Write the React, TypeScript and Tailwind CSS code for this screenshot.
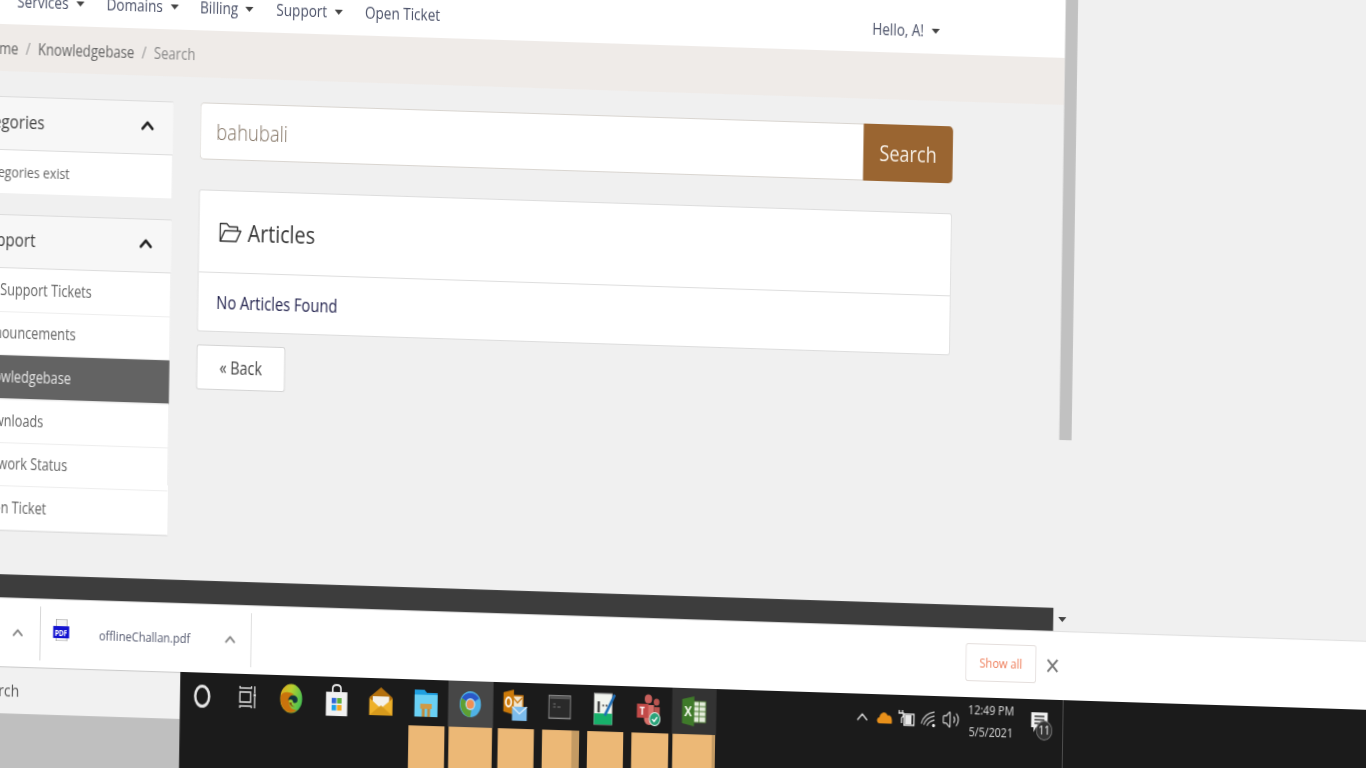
import { ChevronUp, Volume2 } from "lucide-react";

const navItems = [
  { label: "Services", width: "w-[109px]" },
  { label: "Domains", width: "w-[114px]" },
  { label: "Billing", width: "w-[93px]" },
  { label: "Support", width: "w-[108px]" },
];

const supportLinks = ["My Support Tickets", "Announcements", "Knowledgebase", "Downloads", "Network Status", "Open Ticket"];

function Caret({ className = "" }: { className?: string }) {
  return <span className={`inline-block w-0 h-0 border-x-[5px] border-x-transparent border-t-[5px] border-t-[#444] ${className}`} />;
}

function PanelHeader({ title, inset }: { title: string; inset: string }) {
  return (
    <div className={`h-[53px] bg-[#f7f7f7] border-b border-[#dcdcdc] flex items-center justify-between pb-[5px] pr-[19px] text-[18.500px] text-[#444] ${inset}`}>
      <span>{title}</span>
      <ChevronUp size={24} strokeWidth={3} className="text-[#222]" />
    </div>
  );
}

function EdgeIcon() {
  return (
    <svg width="28" height="30" viewBox="0 0 28 30">
      <defs>
        <linearGradient id="edgeTop" x1="0" y1="0" x2="1" y2="0.400">
          <stop offset="0" stopColor="#e8a21a" />
          <stop offset="0.500" stopColor="#b9cf2e" />
          <stop offset="1" stopColor="#4fc24f" />
        </linearGradient>
      </defs>
      <ellipse cx="13.500" cy="15" rx="13.500" ry="14.500" fill="url(#edgeTop)" />
      <path d="M1 12c-2 9 4 17 12 17 3 0 6-1 8-3-5 1-9-2-10-6-1-5 2-9 6-9-6-3-13-3-16 1z" fill="#c9730c" />
      <path d="M10 17c0-4 4-6 8-5 3 1 4 3 3 6-1 1-3 2-5 1 0-3-3-4-6-2z" fill="#12343c" />
      <path d="M11 19c1 3 4 5 7 4-2 0-4-1-4-4z" fill="#7d4d12" />
    </svg>
  );
}

function StoreIcon() {
  return (
    <svg width="28" height="32" viewBox="0 0 28 32">
      <path d="M9 9V4.500C9 2 11 1 14 1s5 1 5 3.500V9" fill="none" stroke="#e8e8e8" strokeWidth="2" />
      <rect x="1" y="8" width="26" height="24" fill="#f1f1f1" />
      <rect x="8" y="14" width="5.500" height="5.500" fill="#2f66d8" />
      <rect x="14.500" y="14" width="5.500" height="5.500" fill="#5cae3a" />
      <rect x="8" y="21" width="5.500" height="5.500" fill="#1ba0e8" />
      <rect x="14.500" y="21" width="5.500" height="5.500" fill="#f2a71b" />
    </svg>
  );
}

function MailIcon() {
  return (
    <svg width="30" height="30" viewBox="0 0 30 30">
      <path d="M15 1 29 11v18H1V11z" fill="#b4700c" />
      <path d="M5 10h20v7l-10 6-10-6z" fill="#f4f1ea" />
      <path d="M1 12 15 22 29 12v17H1z" fill="#eeb12a" />
      <path d="M1 29 15 19 29 29z" fill="#d79a1c" />
    </svg>
  );
}

function FolderIcon() {
  return (
    <svg width="30" height="28" viewBox="0 0 30 28">
      <path d="M1 1h12l3 3h13v24H1z" fill="#1f9fe0" />
      <rect x="1" y="6" width="28" height="22" fill="#6ad0f4" />
      <rect x="8" y="15" width="14" height="5" fill="#d09a46" />
      <rect x="10" y="20" width="3.500" height="8" fill="#c08c3c" />
      <rect x="16.500" y="20" width="3.500" height="8" fill="#c08c3c" />
    </svg>
  );
}

function ChromeIcon() {
  return (
    <svg width="28" height="28" viewBox="0 0 28 28">
      <circle cx="14" cy="14" r="13" fill="#4fb2e6" />
      <path d="M3.500 8A13 13 0 0 1 24.500 8L14 14z" fill="#2a58c8" />
      <path d="M3.500 8A13 13 0 0 0 14 27l2-12z" fill="#5e9f33" />
      <circle cx="14" cy="14" r="6" fill="#b9dff2" />
      <circle cx="14" cy="14" r="4.500" fill="#ef8f52" />
    </svg>
  );
}

function OutlookIcon() {
  return (
    <svg width="30" height="32" viewBox="0 0 30 32">
      <rect x="11" y="6" width="13" height="14" fill="#f2e6cf" stroke="#c9760b" strokeWidth="1.500" />
      <path d="M12 8 17.500 13 23 8" fill="none" stroke="#c9760b" strokeWidth="1.500" />
      <path d="M0 3 13 0v25L0 22z" fill="#cc7a0a" />
      <ellipse cx="6.500" cy="12.500" rx="3.300" ry="4.500" fill="none" stroke="#fff" strokeWidth="2" />
      <rect x="11" y="17" width="18" height="14" fill="#7cbcec" />
      <path d="M11 17l9 7 9-7" fill="none" stroke="#e8f3fc" strokeWidth="1.300" />
    </svg>
  );
}

function TerminalIcon() {
  return (
    <svg width="28" height="24" viewBox="0 0 28 24">
      <rect x=".700" y=".700" width="26.600" height="22.600" fill="#2a2a2a" stroke="#8c8c8c" strokeWidth="1.400" />
      <rect x="2" y="2" width="24" height="2" fill="#555" />
      <path d="M6 9h3M6 12h3M11 12h4" stroke="#777" strokeWidth="1.200" />
    </svg>
  );
}

function ChartPadIcon() {
  return (
    <svg width="28" height="34" viewBox="0 0 28 34">
      <rect x="1" y="2" width="22" height="31" fill="#f1f4ee" stroke="#9a9a9a" />
      <path d="M1 22h22v11H1z" fill="#17b06a" />
      <rect x="5" y="10" width="3" height="11" fill="#444" />
      <path d="M11 14h2M15 14h2" stroke="#555" strokeWidth="2" />
      <path d="M14 24 26 3" stroke="#1f6fb8" strokeWidth="3" />
    </svg>
  );
}

function TeamsIcon() {
  return (
    <svg width="30" height="32" viewBox="0 0 30 32">
      <circle cx="14" cy="5" r="4.500" fill="#c8605c" />
      <circle cx="24" cy="8" r="3.500" fill="#b9544f" />
      <path d="M9 11h12v14c0 4-3 6-6 6s-6-3-6-6z" fill="#d8706a" />
      <path d="M21 13h7v8c0 2-2 3-4 3h-3z" fill="#b9544f" />
      <rect x="0" y="10" width="14" height="14" fill="#c24a48" />
      <text x="3.500" y="21.500" fontSize="11" fontWeight="700" fill="#fff" fontFamily="Open Sans">T</text>
      <circle cx="22" cy="25" r="6.500" fill="#2aa37a" stroke="#e0f3ea" />
      <path d="M19 25l2.300 2.300L25 23" fill="none" stroke="#fff" strokeWidth="1.500" />
    </svg>
  );
}

function ExcelIcon() {
  return (
    <svg width="30" height="30" viewBox="0 0 30 30">
      <rect x="14" y="5" width="15" height="21" fill="#e4ecdc" stroke="#4d7a34" />
      <path d="M14 10h15M14 15h15M14 20h15M21 5v21" stroke="#4d7a34" />
      <path d="M0 3 15 0v30L0 27z" fill="#3f7a2a" />
      <text x="3" y="20" fontSize="14" fontWeight="700" fill="#f0f6e8" fontFamily="Open Sans">X</text>
    </svg>
  );
}

const taskIcons = [
  { node: <span className="block w-[20px] h-[23px] rounded-[50%] border-[3px] border-[#e6e6e6]" /> },
  {
    node: (
      <svg width="22" height="24" viewBox="0 0 22 24" fill="none" stroke="#dcdcdc" strokeWidth="1.600">
        <path d="M2 1v2h14V1M2 23v-2h14v2" />
        <rect x="2" y="7" width="13" height="10" />
        <path d="M20 1v7M20 12v11" />
        <rect x="18.500" y="8.500" width="3" height="3" fill="#dcdcdc" stroke="none" />
      </svg>
    ),
  },
  { node: <EdgeIcon /> },
  { node: <StoreIcon /> },
  { node: <MailIcon /> },
  { node: <FolderIcon />, block: "tan" },
  { node: <ChromeIcon />, block: "tan", active: "bg-[#474747]" },
  { node: <OutlookIcon />, block: "tan" },
  { node: <TerminalIcon />, block: "tan", shade: true },
  { node: <ChartPadIcon />, block: "tan" },
  { node: <TeamsIcon />, block: "tan" },
  { node: <ExcelIcon />, block: "tan", active: "bg-[#333333]", shade: true },
];

function TaskCell({ item }: { item: (typeof taskIcons)[number] }) {
  return (
    <div className="w-[54.5px] shrink-0 flex flex-col">
      <div className={`h-[46px] flex items-center justify-center ${item.active ?? ""}`}>{item.node}</div>
      {item.block && (
        <div className={`h-[80px] flex justify-end bg-[#ecb876] ${item.active ? "mx-[1px]" : "ml-[6px] mr-[4px]"}`}>
          {item.shade && <div className={item.active ? "w-[4px] bg-[#c39a63]" : "w-[9px] bg-[#c39a63]"} />}
        </div>
      )}
    </div>
  );
}

export default function App() {
  return (
    <div className="w-[1366px] h-[768px] overflow-hidden bg-[#f0f0f0] font-['Open_Sans',sans-serif] text-[#444]">
      <div className="w-[1800px] origin-top-left [transform:matrix(0.82,0.0262,-0.015,1,-59,-50)] blur-[0.4px]">
        <div className="flex">
          <div className="w-[1372px] h-[645px] flex flex-col">
            {/* Header */}
            <div className="h-[72px] bg-white flex items-end pb-[10px] pl-[94px] text-[16.500px] text-[#4b5168]">
              {navItems.map((item) => (
                <div key={item.label} className={`${item.width} flex items-center gap-[9px]`}>
                  <span>{item.label}</span>
                  <Caret />
                </div>
              ))}
              <span>Open Ticket</span>
              <div className="ml-[527px] flex items-center gap-[9px]">
                <span>Hello, A!</span>
                <Caret />
              </div>
            </div>

            {/* Breadcrumb */}
            <div className="h-[47px] bg-[#efebe8] flex items-center gap-[9px] pl-[51px] text-[16px] text-[#666]">
              <span>Home</span>
              <span className="text-[#999]">/</span>
              <span>Knowledgebase</span>
              <span className="text-[#999]">/</span>
              <span className="text-[#8a8a8a]">Search</span>
            </div>

            {/* Content */}
            <div className="flex-1 flex gap-[32px] pt-[25px] pl-[13px]">
              <div className="w-[274px] flex flex-col gap-[21px]">
                <div className="bg-white border-t border-r border-[#dcdcdc] rounded-tr-[3px]">
                  <PanelHeader title="Categories" inset="pl-[25px]" />
                  <div className="h-[43px] flex items-center pl-[13px] text-[15px] text-[#666]">No Categories exist</div>
                </div>
                <div className="bg-white border-t border-r border-b border-[#dcdcdc] rounded-tr-[3px]">
                  <PanelHeader title="Support" inset="pl-[38px]" />
                  {supportLinks.map((link) => (
                    <div
                      key={link}
                      className={`h-[43.700px] flex items-center pl-[39.500px] text-[15.500px] border-b border-[#eeeeee] ${
                        link === "Knowledgebase" ? "bg-[#636363] text-[#e6e6e6]" : "text-[#666]"
                      }`}
                    >
                      {link}
                    </div>
                  ))}
                </div>
              </div>

              <div className="w-[918px]">
                <div className="h-[57px] flex">
                  <div className="flex-1 bg-white border border-r-0 border-[#d9d5d0] rounded-l-[5px] flex items-center pl-[19px] pt-[1px] text-[22.500px] font-light text-[#857667]">
                    bahubali
                  </div>
                  <div className="w-[109px] bg-[#9a6531] rounded-r-[5px] flex items-center justify-center text-[22px] text-[#f6efe6]">
                    Search
                  </div>
                </div>
                <div className="mt-[30px] bg-white border border-[#dddddd] rounded-[3px]">
                  <div className="h-[82px] flex items-center gap-[7px] pl-[24px] border-b border-[#dddddd] text-[24px] text-[#333]">
                    <svg width="28" height="22" viewBox="0 0 28 22" fill="none" stroke="#333" strokeWidth="1.600" strokeLinejoin="round">
                      <path d="M1.500 20V2.500h8l3 3h10V9" />
                      <path d="M1.500 20 7 9.500h19.500L21 20z" />
                    </svg>
                    <span>Articles</span>
                  </div>
                  <div className="h-[58px] flex items-center pl-[22px] text-[17.900px] text-[#24244f]">No Articles Found</div>
                </div>
                <div className="mt-[13px] w-[108px] h-[45px] bg-white border border-[#d4d4d4] rounded-[3px] flex items-center justify-center text-[17.500px] text-[#444]">
                  « Back
                </div>
              </div>
            </div>

            {/* Footer */}
            <div className="h-[23.500px] mr-[4px] bg-[#3d3d3d]" />
          </div>

          {/* Scrollbar */}
          <div className="w-[15px] flex flex-col items-center">
            <div className="w-full h-[454px] bg-[#c1c1c1]" />
            <Caret className="mt-[177px] -ml-[2px]" />
          </div>
        </div>

        {/* Download shelf */}
        <div className="h-[69px] bg-white border-t border-[#dedede] flex items-center pl-[96px] text-[#666]">
          <ChevronUp size={20} strokeWidth={2.500} className="text-[#888]" />
          <div className="ml-[17px] w-px h-[54px] bg-[#cfcfcf]" />
          <svg width="20" height="22" viewBox="0 0 20 22" className="ml-[15px] -mt-[8px]">
            <rect x="4" y="0" width="13" height="22" fill="#f3f3f3" stroke="#a8a8a8" />
            <rect x="0" y="7" width="20" height="12" fill="#1212d0" />
            <text x="2" y="16.500" fontSize="8" fontWeight="700" fill="#fff" fontFamily="Open Sans">PDF</text>
          </svg>
          <span className="ml-[36px] w-[112px] text-[13.500px] text-[#555a70] whitespace-nowrap">offlineChallan.pdf</span>
          <ChevronUp size={20} strokeWidth={2.500} className="ml-[38px] text-[#888]" />
          <div className="ml-[15px] w-px h-[54px] bg-[#d8d8d8]" />
          <div className="ml-[871px] w-[86px] h-[38px] -mt-[2px] border border-[#e4dedc] rounded-[3px] flex items-center justify-center text-[13.500px] text-[#ee7c58]">
            Show all
          </div>
          <svg width="16" height="16" viewBox="0 0 16 16" className="ml-[12px]" stroke="#777" strokeWidth="2.200">
            <path d="M2 2 14 14M14 2 2 14" />
          </svg>
        </div>

        {/* Taskbar */}
        <div className="flex h-[130px]">
          <div className="w-[305px] flex flex-col">
            <div className="h-[47px] bg-[#f1f1f1] border-t border-[#cccccc] flex items-center pl-[55px] text-[17px] text-[#555]">
              Search
            </div>
            <div className="flex-1 bg-[#bfbfbf]" />
          </div>
          <div className="flex-1 bg-[#1b1b1b] flex items-start text-[#e0e0e0]">
            {taskIcons.map((item, index) => (
              <TaskCell key={index} item={item} />
            ))}
            <div className="ml-[164.500px] h-[46px] flex items-center">
              <div className="w-[27px] flex justify-center">
                <ChevronUp size={22} strokeWidth={1.800} />
              </div>
              <div className="w-[27px] flex justify-center">
                <svg width="20" height="14" viewBox="0 0 20 14">
                  <path d="M4 13C0 13 0 7 4 7c0-4 7-8 10-2 4-1 6 3 5 8z" fill="#e8901a" />
                </svg>
              </div>
              <div className="w-[27px] flex justify-center">
                <svg width="22" height="18" viewBox="0 0 22 18" fill="none" stroke="#e6e6e6" strokeWidth="1.500">
                  <path d="M2 1v3M6 1v3M1 4h6v3l-2 2v5" />
                  <rect x="8" y="5" width="12" height="11" />
                  <rect x="9" y="6" width="8" height="9" fill="#e6e6e6" stroke="none" />
                </svg>
              </div>
              <div className="w-[27px] flex justify-center">
                <svg width="20" height="18" viewBox="0 0 20 18" fill="none" stroke="#bbb" strokeWidth="1.300">
                  <path d="M1 14C3 7 9 3 17 2M4 15c2-5 6-8 13-9M8 16c1-3 4-5 9-6" />
                  <circle cx="16" cy="15.500" r="1.800" fill="#eee" stroke="none" />
                </svg>
              </div>
              <div className="w-[27px] flex justify-center">
                <Volume2 size={22} strokeWidth={1.400} />
              </div>
              <div className="ml-[5.500px] w-[60px] flex flex-col items-center text-[13px] leading-[22px] whitespace-nowrap text-[#dcdcdc]">
                <span>12:49 PM</span>
                <span>5/5/2021</span>
              </div>
              <div className="relative ml-[9px] w-[40px] h-[30px] flex justify-center mt-[7px]">
                <svg width="22" height="22" viewBox="0 0 22 22">
                  <path d="M1 1h20v15H7l-3 5v-5H1z" fill="#f0f0f0" />
                  <path d="M5 5h12M5 8.500h12M5 12h8" stroke="#333" strokeWidth="1.400" />
                </svg>
                <span className="absolute left-[16px] top-[9px] w-[20px] h-[20px] rounded-full bg-[#333] border border-[#777] flex items-center justify-center text-[12px] text-white">
                  11
                </span>
              </div>
              <div className="ml-[8px] self-start w-px h-[130px] bg-[#5a5a5a]" />
            </div>
          </div>
        </div>
      </div>
    </div>
  );
}
